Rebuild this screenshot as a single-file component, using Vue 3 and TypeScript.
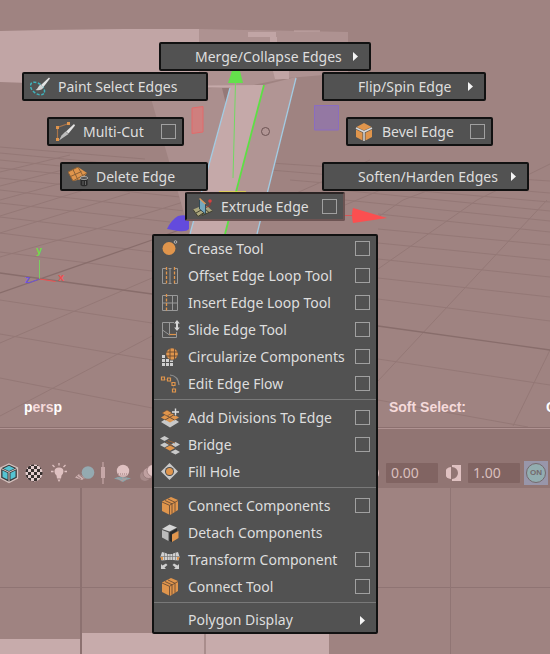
<script setup lang="ts">
import { ref } from 'vue'

type Kind = 'option' | 'submenu' | 'plain'

interface Item {
  id: string
  label: string
  kind: Kind
}

const cubeStack =
  '<path d="M2 5.500 11 1l7 3v10l-8 5-8-4z" fill="#e0954c"/><path d="M2 6l7.500 3.300V19M5 4.500l7 3.300v10M8 3l7 3.300v9.500M9.500 9.300 18 4.500" fill="none" stroke="#6b4d36" stroke-width="0.9"/>'

const icons: Record<string, string> = {
  paint:
    '<ellipse cx="7.500" cy="11.500" rx="8" ry="5" transform="rotate(38 7.500 11.500)" fill="none" stroke="#3fb3bd" stroke-width="1.500" stroke-dasharray="3 1.600"/><path d="M19 0.500 20 1.500 13.500 10 11 8z" fill="#e4e4e4"/><path d="M10.500 7.500l3 2.800c-1 2.800-4.500 3.500-8 2.700 2.500-.7 2.500-4 5-5.500z" fill="#d4d4d4"/>',
  multicut:
    '<path d="M2.500 17.500V5.500L13.500 1.500" fill="none" stroke="#a8744a" stroke-width="1.200"/><g fill="#e0954c"><path d="M1 4h3v3H1zM12 0h3v3h-3zM1 16h3v3H1z"/></g><path d="M19 2l1 1.500-6.500 8L11 9.500z" fill="#e4e4e4"/><path d="M10.500 9.500l3 2.500L4 18.500l2.500-5z" fill="#bdbdbd"/>',
  delete:
    '<path d="M0 5 10 0l9 6-5 6-9 2z" fill="#e0954c"/><path d="M0 5 5 14M5 2.500l5 10.500M10 0l5 9M2.500 9.500l11-5M0 5 10 0M5 14l14-8" fill="none" stroke="#8a6036" stroke-width="1"/><path d="M12.500 11h7v7c-1 1.700-6 1.700-7 0z" fill="#292929"/><ellipse cx="16" cy="11" rx="3.800" ry="1.600" fill="#555" stroke="#b5b5b5" stroke-width="0.8"/><path d="M15 14v4M17.500 14v4" stroke="#777" stroke-width="0.8"/>',
  bevel:
    '<path d="M2.500 5 10 1l7.500 4L10 8.500z" fill="#e0954c"/><path d="M2 7.500l6.500 3.300v7.700L2 15zM18 7.500l-6.500 3.300v7.700L18 15z" fill="#e0954c"/><path d="M2 6l8 3.800L18 6M10 10v9" fill="none" stroke="#d8d8d8" stroke-width="1.500"/>',
  extrude:
    '<path d="M0 12.500 6 10l5 5.500-6 4z" fill="#aaa57c"/><path d="M9 18.500 19.500 14 14 9l-6 3z" fill="#aaa57c"/><path d="M0 12.500 5 19.500l6-4L9 18.500 19.500 14M3 16l6-3.500M11 11l5 4.500" fill="none" stroke="#40402f" stroke-width="1"/><path d="M6.500 1.500 12.500 7v10l-6-5z" fill="#75a7bd" stroke="#2b4450" stroke-width="0.9"/><path d="M6.500 1.500 12.500 7" stroke="#e39b5b" stroke-width="1.400"/><path d="M13 10.500 17 8.500V4" fill="none" stroke="#9c3530"/><circle cx="17" cy="4" r="1.800" fill="#d84040"/>',
  crease:
    '<circle cx="9" cy="9.500" r="6.500" fill="#e0954c"/><circle cx="15.500" cy="3" r="1.300" fill="none" stroke="#bdbdbd" stroke-width="0.9"/>',
  offset:
    '<path d="M6 2.500H2.500v15H6M8.500 2.500h3M8.500 17.500h3M14 2.500h3.500v15H14M10 2v16" fill="none" stroke="#999"/><path d="M6.500 1v18M14.500 1v18" stroke="#e0954c" stroke-width="1.300" stroke-dasharray="3 1.500"/>',
  insert:
    '<path d="M2.500 2.500h15v15h-15zM12.500 2.500v15M2.500 10h15" fill="none" stroke="#999"/><path d="M6.500 1v18" stroke="#e0954c" stroke-width="1.300" stroke-dasharray="3 1.500"/>',
  slide:
    '<path d="M14 2.500H2.500v15h14V12M9.500 2.500v12M2.500 10l7 5" fill="none" stroke="#999"/><path d="M9.500 14.500H16" stroke="#e0954c" stroke-width="1.200"/><path d="M17 0l2.800 3.500H18v4h1.800L17 11l-2.800-3.500H16v-4h-1.800z" fill="#d8d8d8"/>',
  circularize:
    '<circle cx="12" cy="7" r="5.800" fill="#e0954c"/><path d="M10 1.500v11M14.500 1.500v11M6 5h12M6 9h12" stroke="#674a34" stroke-width="0.9"/><g fill="#d0d0d0"><path d="M2 8h3v3H2zM2 12h3v3H2zM6 12h3v3H6zM2 16h3v3H2zM6 16h3v3H6zM10 13.500h3V15h-3zM10 16h3v3h-3z"/></g>',
  flow: '<path d="M3 5.500c7-1 11 5 11.500 13" fill="none" stroke="#7d6857"/><g fill="#525252" stroke="#e0954c" stroke-width="1.200"><path d="M1.500 3h3v3h-3zM7.500 4h3v3h-3zM12 8.500h3v3h-3zM12.500 15h3v3h-3z"/></g><path d="M10 1c5.500.5 8.500 4.500 9 10" fill="none" stroke="#8e8e8e" stroke-width="1.200"/>',
  divide:
    '<path d="M1 14 10 19.500 19 14l-3-2H4z" fill="#c9c9c9"/><path d="M1 9.500 9.500 4 19 9.500 10 14.500z" fill="#e0954c"/><path d="M5.500 7l9 5M5 12l9.500-5.500" stroke="#6c4e36"/><path d="M2 5 7 2l5 3-5 3z" fill="#e0954c" stroke="#6c4e36" stroke-width="0.6"/><path d="M15.500 0v8M11.500 4h8" stroke="#525252" stroke-width="3"/><path d="M15.500 0.500v7M12 4h7" stroke="#dedede" stroke-width="1.400"/>',
  bridge:
    '<g fill="#c9c9c9"><path d="M0 3.500 4.500 1 9 3.500 4.500 6zM11 9.500 15.500 7 20 9.500 15.500 12zM0 10 4.500 7.500 9 10l-4.500 2.500zM10.500 17 15.500 14.500 20 17l-4.500 2.500z"/></g><path d="M8 5.500 15 8M6 7l7 4" stroke="#925f38"/><path d="M5 13 10 10.500 15 13l-5 2.800z" fill="#e0954c"/>',
  fill: '<path d="M9.500 1 18 9.500 9.500 18 1 9.500z" fill="#c9c9c9"/><circle cx="9.500" cy="9.500" r="4.500" fill="#4c4c4c"/><circle cx="9.500" cy="9.500" r="3.500" fill="#e0954c"/>',
  connect: cubeStack,
  detach:
    '<path d="M2 6 9.500 1.500 17 4.500 9.500 8.500z" fill="#d5d5d5"/><path d="M2 7l6.500 2.500V18L2 14.500z" fill="#bbb"/><path d="M9.500 9.500 17 5.500V8l-5 3v8l-2.500-1z" fill="#292929"/><path d="M12 11.500 18.500 8v7L12 19z" fill="#e0954c"/>',
  transform:
    '<path d="M2 2l5 1.500V10l-5.500.5-1-4zM18 2l-5 1.500V10l5.500.5 1-4zM7.500 4h5v6h-5z" fill="#cfcfcf"/><path d="M4.500 2.500v8M15.500 2.500v8M1 6.500h18M10 4v6" stroke="#777" stroke-width="0.7"/><path d="M0.500 7H3v3H1.500zM17 7h2.500l-1 3H17z" fill="#e0954c"/><path d="M1 14v5h5l-1.500-1.500L7.500 15 6 13.500 2.500 15.500zM19 14v5h-5l1.500-1.500-3-2.500 1.500-1.500 3.500 2z" fill="#cfcfcf"/>',
  tool: cubeStack,
}

const radial: Item[] = [
  { id: 'merge', label: 'Merge/Collapse Edges', kind: 'submenu' },
  { id: 'paint', label: 'Paint Select Edges', kind: 'plain' },
  { id: 'flip', label: 'Flip/Spin Edge', kind: 'submenu' },
  { id: 'multicut', label: 'Multi-Cut', kind: 'option' },
  { id: 'bevel', label: 'Bevel Edge', kind: 'option' },
  { id: 'delete', label: 'Delete Edge', kind: 'plain' },
  { id: 'soften', label: 'Soften/Harden Edges', kind: 'submenu' },
  { id: 'extrude', label: 'Extrude Edge', kind: 'option' },
]

const groups: Item[][] = [
  [
    { id: 'crease', label: 'Crease Tool', kind: 'option' },
    { id: 'offset', label: 'Offset Edge Loop Tool', kind: 'option' },
    { id: 'insert', label: 'Insert Edge Loop Tool', kind: 'option' },
    { id: 'slide', label: 'Slide Edge Tool', kind: 'option' },
    { id: 'circularize', label: 'Circularize Components', kind: 'option' },
    { id: 'flow', label: 'Edit Edge Flow', kind: 'option' },
  ],
  [
    { id: 'divide', label: 'Add Divisions To Edge', kind: 'option' },
    { id: 'bridge', label: 'Bridge', kind: 'option' },
    { id: 'fill', label: 'Fill Hole', kind: 'plain' },
  ],
  [
    { id: 'connect', label: 'Connect Components', kind: 'option' },
    { id: 'detach', label: 'Detach Components', kind: 'plain' },
    { id: 'transform', label: 'Transform Component', kind: 'option' },
    { id: 'tool', label: 'Connect Tool', kind: 'option' },
  ],
  [{ id: 'display', label: 'Polygon Display', kind: 'submenu' }],
]

const displayTools = [
  {
    id: 'Wireframe on shaded',
    art: '<path d="M9 1 17.500 5v10L9 19.500.5 15V5z" fill="#3a3c3e" stroke="#d6c3bf" stroke-width="1.300"/><path d="M9 2.800 14.500 5.500 9 8 3.500 5.500zM2.500 7.500 7.500 10v6.500L2.500 14zM15.500 7.500 10.500 10v6.500l5-2.500z" fill="#55c4d2"/><path d="M1 5.500l8 3.800 8-3.800M9 9.300v10" fill="none" stroke="#d6c3bf"/>',
  },
  {
    id: 'Textured',
    art: '<defs><pattern id="chk" width="6" height="6" patternUnits="userSpaceOnUse"><path d="M0 0h6v6H0z" fill="#e3cdcd"/><path d="M0 0h3v3H0zM3 3h3v3H3z" fill="#37302f"/></pattern></defs><circle cx="9" cy="10" r="8.500" fill="url(#chk)"/>',
  },
  {
    id: 'Use all lights',
    art: '<path d="M9 4.500c6 0 5 6 2.500 8l-.5 3H7l-.5-3C4 10.500 3 4.500 9 4.500zM7.500 16.500h3L9 19z" fill="#dfc1c1"/><path d="M9 0v2.500M2.500 2l2 2M15.500 2l-2 2M1 8.500h2.500M14.500 8.500H17" stroke="#dfc1c1" stroke-width="1.300"/>',
  },
  {
    id: 'Shadows',
    art: '<path d="M0 14.500 4 11l6 4-3 2z" fill="#cdb0b0"/><path d="M2 13l4 3M4 11.500l5 4" stroke="#8d7070" stroke-width="0.800"/><circle cx="13" cy="9.500" r="6.300" fill="#94aab1"/>',
  },
  {
    id: 'Exposure slider',
    art: '<path d="M3 -1v22" stroke="#c6a7a7" stroke-width="1.200"/><path d="M1 4h4v11H1z" fill="#c6a7a7"/>',
  },
  {
    id: 'Ambient occlusion',
    art: '<path d="M1 15.500 5 14l9 .5 4 1-5 1.500-3 2-4-2z" fill="#86a5ab"/><path d="M4 15l6 3M9 15l4 2M14 15l-6 3" stroke="#b79b99" stroke-width="0.800"/><circle cx="10" cy="8" r="6.200" fill="#dfc1c1"/><path d="M5 11h10M6.500 13h7" stroke="#9b7d7d" stroke-dasharray="1 1"/>',
  },
  {
    id: 'Motion blur',
    art: '<circle cx="7" cy="13" r="5" fill="#a68a89"/><circle cx="10.500" cy="10" r="5.500" fill="#bfa0a0" stroke="#8d7070" stroke-width="0.700"/><circle cx="15" cy="7.500" r="6" fill="#dfc1c1" stroke="#8d7070" stroke-width="0.700"/>',
  },
]

const exposure = ref('0.00')
const gamma = ref('1.00')
const managed = ref(true)
</script>

<template>
  <main class="workspace">
    <section class="viewport" aria-label="Perspective view">
      <svg class="scene" viewBox="0 0 550 428" preserveAspectRatio="xMinYMin slice" aria-hidden="true">
        <path
          class="grid"
          d="M0 147l145 12M0 153l160 15M0 160l170 17M0 168l175 17M0 178l180 19M0 190l185 21M0 203l170 19M0 217l160 19M0 233l152 19M0 252l152 19M0 300l152 23M0 334l152 26M0 378l152 30
             M0 257 93 230 190 200M0 233 130 193M0 216 100 185M0 200 110 170M0 186 90 163M0 172 70 155M0 343l152-65M0 416l152-80"
        />
        <path
          class="grid"
          d="M270 163l280 18M270 170l280 23M290 180l260 22M340 190l210 21M345 200l205 21M378 214l172 18M378 229l172 16M378 243l172 17M378 259l172 18M378 278l172 19M378 299l172 22M378 359l172 26M378 400l150 27
             M378 269l99-69 73-36M378 381 547 200M550 350l-37 76M378 217l25-17 87-33M345 205l100-42M270 205l100-45"
        />
        <path class="grid axis" d="M0 273l152 21M0 293l152-53 38-14M378 326l172 24" />

        <path d="M0 31l45-1 78-1h76v60L0 82z" fill="#c1a5a5" />
        <path d="M199 29l149 3v41l-60 5-40 8h-49z" fill="#ae9291" />
        <path d="M248 32h28v5h-28zM270 37h7v42h-2l-5-20zM275 60h14v19h-14z" fill="#c1a5a5" />
        <path d="M294 31h26" stroke="#c1a5a5" />
        <path d="M150 95l80-9-40 148z" fill="#ab8f8e" />
        <path d="M222 88h10l-6 16z" fill="#957978" />
        <path d="M264 85l32-8-39 157h-32z" fill="#b19594" />
        <path d="M208 85.500l56-.5-39 149h-35l40-146.500h-22z" fill="#c5a9a9" />
        <path d="M230 88 190 234M296 78l-39 156" fill="none" stroke="#a3cbe2" stroke-width="1.300" />
        <path d="M264 85 225 234" stroke="#5de044" stroke-width="1.800" />
        <path d="M235.500 83 233 178" stroke="#72d863" />
        <path d="M232 71h8l3 12h-15z" fill="#64e04c" />
        <path d="M192 108l11-1.500V132l-11 1.500z" fill="#cf7f7e" stroke="#e26b6b" />
        <path d="M314.500 105.500h24V130h-24z" fill="#9478a3" stroke="#8a6dc1" />
        <circle cx="265.500" cy="131.500" r="4" fill="none" stroke="#6c5353" />
        <path d="M219 192h27" stroke="#e5d940" stroke-width="1.500" />
        <path d="M167 229q4-9 11-13 7-2 11 1v12q-3 3-11 2z" fill="#634bdd" />
        <path d="M345 215.500h8" stroke="#d65555" />
        <path d="M353 208l34 10-34 5q-2-8 0-15z" fill="#fb4f50" />
        <path d="M39.500 279v-19" stroke="#7ace61" />
        <path d="M39.500 279l16 2.500" stroke="#f05050" />
        <path d="M39.500 279l-11 4" stroke="#6e53d7" />
        <g class="axis-name">
          <text x="36" y="254" fill="#70da4b">y</text>
          <text x="58" y="281" fill="#f05050">x</text>
          <text x="25" y="283" fill="#6e53d7">z</text>
        </g>
      </svg>
      <div class="hud">
        <span><b>p</b>ers<b>p</b></span>
        <span class="hud-state">Soft Select:<b class="hud-cut">O</b></span>
      </div>
    </section>

    <section class="toolbar" aria-label="Panel toolbar">
      <div class="tool-set">
        <button
          v-for="tool in displayTools"
          :key="tool.id"
          type="button"
          :class="['tool', { slim: tool.id === 'Exposure slider' }]"
          :aria-label="tool.id"
        >
          <svg v-html="tool.art" />
        </button>
      </div>
      <div class="color-set">
        <svg class="edge-icon" viewBox="0 0 20 20" aria-hidden="true"><circle cx="10" cy="10" r="7" fill="#dfc1c1" /></svg>
        <input v-model="exposure" type="text" aria-label="Exposure" />
        <svg class="gamma-icon" viewBox="0 0 16 16" aria-hidden="true">
          <path d="M6 0h9v16H6v-2a6 6 0 0 0 0-12z" fill="#dfc1c1" />
          <path d="M5 2v12a6 6 0 0 1 0-12z" fill="#dfc1c1" />
        </svg>
        <input v-model="gamma" type="text" aria-label="Gamma" />
        <button type="button" class="managed" :aria-pressed="managed" @click="managed = !managed"><span>ON</span></button>
      </div>
    </section>

    <section class="lower" aria-label="Front view">
      <div class="cell cell-left"><i class="slab slab-low"></i></div>
      <div class="cell cell-mid"><i class="slab"></i><i class="slab slab-wide"></i></div>
      <div class="cell"></div>
    </section>

    <nav class="radial" aria-label="Edge marking menu">
      <div v-for="item in radial" :key="item.id" :class="['entry', 'spoke', item.id]">
        <button type="button" class="command">
          <svg class="icon" viewBox="0 0 20 20" aria-hidden="true" v-html="icons[item.id] ?? ''" />
          <span>{{ item.label }}</span>
        </button>
        <input v-if="item.kind === 'option'" type="checkbox" :aria-label="item.label + ' options'" />
        <svg v-else-if="item.kind === 'submenu'" class="arrow" viewBox="0 0 15 15" aria-hidden="true">
          <path d="M5 3l5 4.500L5 12z" />
        </svg>
      </div>
    </nav>

    <nav class="menu" aria-label="Edge menu">
      <div v-for="(group, index) in groups" :key="index" class="group">
        <div v-for="item in group" :key="item.id" class="entry">
          <button type="button" class="command">
            <svg class="icon" viewBox="0 0 20 20" aria-hidden="true" v-html="icons[item.id] ?? ''" />
            <span>{{ item.label }}</span>
          </button>
          <input v-if="item.kind === 'option'" type="checkbox" :aria-label="item.label + ' options'" />
          <svg v-else-if="item.kind === 'submenu'" class="arrow" viewBox="0 0 15 15" aria-hidden="true">
            <path d="M5 3l5 4.500L5 12z" />
          </svg>
        </div>
      </div>
    </nav>
  </main>
</template>

<style>
body {
  background: #9f8381;
}
</style>

<style scoped>
.workspace {
  position: relative;
  display: grid;
  grid-template-rows: 427fr 61px 166fr;
  min-height: 100vh;
  overflow: hidden;
  background: #9f8381;
  color: #dedede;
  font: 14px/20px "Noto Sans", "Open Sans", sans-serif;
}

.viewport {
  position: relative;
  display: flex;
  flex-direction: column;
  justify-content: flex-end;
  min-width: 0;
  overflow: hidden;
}

.scene {
  position: absolute;
  inset: 0;
  width: 100%;
  height: 100%;
}

.grid {
  fill: none;
  stroke: #947876;
}

.axis {
  stroke: #886d6b;
  stroke-width: 1.3px;
}

.axis-name {
  font: bold 11px "Liberation Sans", sans-serif;
}

.hud {
  position: relative;
  display: flex;
  justify-content: space-between;
  padding: 0 0 10px 24px;
  color: #f5dada;
  font: bold 14px/20px "Liberation Sans", Arial, sans-serif;
}

.hud b {
  color: #fff;
}

.hud-state {
  display: flex;
  gap: 80px;
}

.hud-cut {
  width: 4px;
  overflow: hidden;
}

.toolbar {
  display: flex;
  align-items: flex-end;
  justify-content: space-between;
  box-sizing: border-box;
  padding: 0 2px 3px 0;
  border-top: 1px solid #8c706f;
  background: #917573;
  box-shadow: inset 0 1px #b09392;
}

.tool-set,
.color-set {
  display: flex;
  align-items: center;
}

.tool-set {
  gap: 7px;
  padding-bottom: 2px;
}

.tool {
  display: flex;
  width: 18px;
  padding: 0;
  border: 0;
  background: none;
}

.slim {
  width: 6px;
}

.tool svg {
  width: 100%;
  height: 20px;
  overflow: visible;
}

.edge-icon {
  width: 20px;
  height: 20px;
  margin-right: 4px;
}

.gamma-icon {
  width: 16px;
  height: 16px;
  margin: 0 6px 0 8px;
}

.color-set input {
  box-sizing: border-box;
  width: 52px;
  height: 20px;
  padding: 0 5px;
  border: 0;
  border-radius: 1px;
  background: #816462;
  color: #d9bfbd;
  font: inherit;
}

.managed {
  display: grid;
  place-items: center;
  width: 24px;
  height: 24px;
  margin-left: 4px;
  padding: 0;
  border: 0;
  background: #9896aa;
}

.managed span {
  box-sizing: border-box;
  width: 20px;
  height: 20px;
  border: 1px solid #74696c;
  border-radius: 50%;
  background: #92adb0;
  color: #72696c;
  font: bold 8px/18px "Liberation Sans", sans-serif;
  text-align: center;
}

.lower {
  display: grid;
  grid-template-columns: 82fr 369fr 99fr;
  background: linear-gradient(#8f7473, #8f7473) 0 60% / 100% 1px no-repeat;
}

.cell {
  display: flex;
  align-items: flex-end;
}

.cell-left {
  border-right: 2px solid #8c7170;
}

.cell-mid {
  border-right: 1px solid #907574;
}

.slab {
  flex: 124 1 0;
  height: 21px;
  background: #c7abab;
}

.slab-low {
  height: 15px;
}

.slab-wide {
  border-left: 2px solid #a98d8c;
  margin-right: 33%;
}

.entry {
  display: flex;
  align-items: center;
  box-sizing: border-box;
  height: 27px;
  padding: 0 6px;
}

.command {
  display: flex;
  flex: 1;
  align-items: center;
  gap: 8px;
  padding: 0;
  border: 0;
  background: none;
  color: inherit;
  font: inherit;
  white-space: nowrap;
}

.icon {
  flex: none;
  width: 20px;
  height: 20px;
}

.entry input {
  appearance: none;
  flex: none;
  box-sizing: border-box;
  width: 15px;
  height: 15px;
  margin: 0;
  border: 1px solid #a0a0a0;
}

.arrow {
  flex: none;
  width: 15px;
  height: 15px;
  fill: #f5f5f5;
}

.spoke,
.menu {
  position: absolute;
  border: 2px solid #111;
  border-radius: 2px;
  background: #525252;
}

.spoke {
  height: 29px;
}

.merge {
  top: 42px;
  left: 159px;
  width: 212px;
}

.paint {
  top: 72px;
  left: 22px;
  width: 186px;
}

.flip {
  top: 72px;
  left: 322px;
  width: 164px;
}

.multicut {
  top: 117px;
  left: 47px;
  width: 137px;
}

.bevel {
  top: 117px;
  left: 346px;
  width: 147px;
}

.delete {
  top: 162px;
  left: 60px;
  width: 148px;
}

.soften {
  top: 162px;
  left: 322px;
  width: 207px;
}

.extrude {
  top: 192px;
  left: 185px;
  width: 160px;
  border-color: #2b2424 #6d5453 #6d5453 #111;
}

.menu {
  top: 234px;
  left: 152px;
  box-sizing: border-box;
  width: 226px;
}

.menu .entry {
  padding-bottom: 2px;
}

.group + .group {
  margin-top: 1px;
  padding-top: 5px;
  border-top: 1px solid #797979;
}

.menu .group:last-child .entry {
  height: 24px;
  padding-bottom: 0;
}
</style>
